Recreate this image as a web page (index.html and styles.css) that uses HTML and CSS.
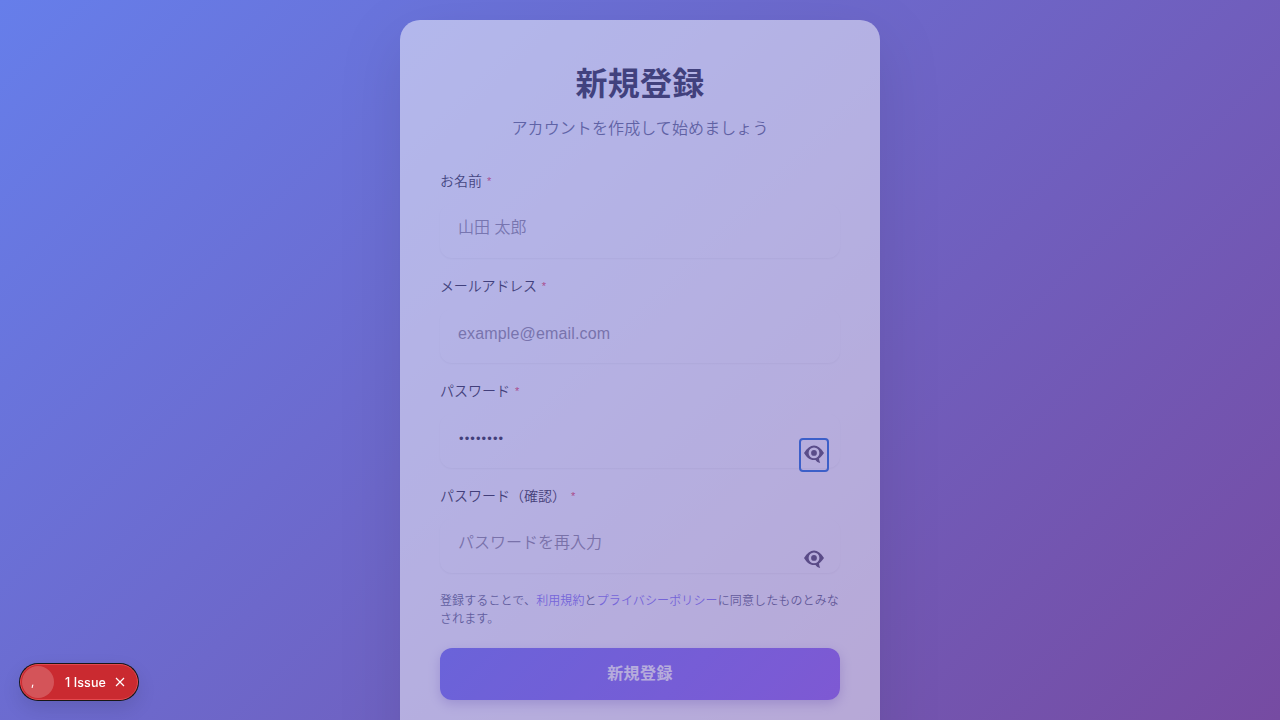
FILE: index.html
```html
<!DOCTYPE html>
<html lang="ja">
<head>
<meta charset="utf-8">
<title>新規登録</title>
<link rel="stylesheet" href="styles.css">
</head>
<body>
<main class="page">
  <section class="card">
    <header class="card-header">
      <h1 class="title">新規登録</h1>
      <p class="subtitle">アカウントを作成して始めましょう</p>
    </header>
    <form class="form">
      <div class="field">
        <label class="label" for="name">お名前 <span class="required">*</span></label>
        <input class="input" id="name" type="text" placeholder="山田 太郎">
      </div>
      <div class="field">
        <label class="label label-kana" for="email">メールアドレス <span class="required">*</span></label>
        <input class="input input-email" id="email" type="email" placeholder="example@email.com">
      </div>
      <div class="field">
        <label class="label" for="password">パスワード <span class="required">*</span></label>
        <input class="input input-password" id="password" type="password" value="password">
        <button class="toggle toggle-focused" type="button" aria-label="パスワードを表示">
          <svg class="eye" viewBox="0 0 20 20"><path fill-rule="evenodd" d="M0 9C3 4 6.300 1.500 10 1.500S17 4 20 9c-1.800 2.800-3.300 4.300-5 5.400.1 1.600.5 2.900 1.200 4.600-2.200-.5-3.800-1.600-4.700-3.100C6.700 16.700 3 14.200 0 9zM10 3.500a5.400 5.400 0 1 0 0 10.800 5.400 5.400 0 1 0 0-10.800z"/><circle cx="10" cy="8.900" r="2.900"/></svg>
        </button>
      </div>
      <div class="field">
        <label class="label" for="confirm">パスワード（確認） <span class="required">*</span></label>
        <input class="input input-confirm" id="confirm" type="password" placeholder="パスワードを再入力">
        <button class="toggle" type="button" aria-label="パスワードを表示">
          <svg class="eye" viewBox="0 0 20 20"><path fill-rule="evenodd" d="M0 9C3 4 6.300 1.500 10 1.500S17 4 20 9c-1.800 2.800-3.300 4.300-5 5.400.1 1.600.5 2.900 1.200 4.600-2.200-.5-3.800-1.600-4.700-3.100C6.700 16.700 3 14.200 0 9zM10 3.500a5.400 5.400 0 1 0 0 10.800 5.400 5.400 0 1 0 0-10.800z"/><circle cx="10" cy="8.900" r="2.900"/></svg>
        </button>
      </div>
      <p class="terms">登録することで、<a class="link">利用規約</a>と<a class="link">プライバシーポリシー</a>に同意したものとみなされます。</p>
      <button class="submit" type="button">新規登録</button>
    </form>
  </section>
</main>
<aside class="issue">
  <span class="issue-mark">,</span>
  <span class="issue-text">1 Issue</span>
  <svg class="issue-close" viewBox="0 0 10 10"><path d="M1 1l8 8M9 1l-8 8"/></svg>
</aside>
</body>
</html>
```
FILE: styles.css
```css
* { box-sizing: border-box; }
body {
  margin: 0;
  height: 720px;
  overflow: hidden;
  font-family: "Liberation Sans", "Noto Sans CJK JP", sans-serif;
  font-weight: 350;
}
.page {
  display: flex;
  justify-content: center;
  height: 720px;
  padding-top: 20px;
  overflow: hidden;
  background: linear-gradient(135deg, #667eea 0%, #764ba2 100%);
}
.card {
  width: 480px;
  height: 880px;
  flex-shrink: 0;
  padding: 41px 40px 40px;
  border-radius: 20px;
  background: #fff;
  box-shadow: 0 20px 60px rgba(0, 0, 0, 0.2);
  opacity: 0.49;
}
.card-header { text-align: center; }
.title {
  margin: 0;
  font-size: 32px;
  line-height: 46px;
  font-weight: 700;
  letter-spacing: 0.2px;
  color: #16162a;
}
.subtitle {
  margin: 10px 0 30px;
  font-size: 16px;
  line-height: 24px;
  letter-spacing: 0.1px;
  color: #545a7a;
}
.form { display: flex; flex-direction: column; }
.field { position: relative; height: 105px; }
.label {
  display: block;
  height: 20px;
  margin-bottom: 13px;
  font-size: 14px;
  line-height: 20px;
  color: #16162a;
}
.label-kana { letter-spacing: -0.15px; }
.required {
  margin-left: 1px;
  font-size: 11px;
  line-height: 1;
  vertical-align: 1px;
  color: #e8304e;
}
.input {
  display: block;
  width: 400px;
  height: 54px;
  padding: 0 16px 6px;
  border: 2px solid transparent;
  border-radius: 12px;
  outline: none;
  background: #fff;
  box-shadow: 0 1px 2px rgba(0, 0, 0, 0.06);
  font: 350 16px "Liberation Sans", "Noto Sans CJK JP", sans-serif;
  color: #16162a;
}
.input-email { padding-bottom: 4px; letter-spacing: 0.15px; }
.input-password {
  padding-left: 17px;
  font-size: 13px;
  letter-spacing: 1.1px;
}
.input-confirm { padding-bottom: 7px; }
.input::placeholder { color: #85818f; }
.toggle {
  position: absolute;
  top: 57px;
  right: 11px;
  width: 30px;
  height: 34px;
  padding: 4px 3px 6px;
  border: 2px solid transparent;
  border-radius: 4px;
  background: none;
}
.toggle-focused { border-color: #0862d6; }
.eye { display: block; width: 20px; height: 20px; fill: #443c56; }
.terms {
  margin: 1px 0 20px;
  font-size: 12px;
  line-height: 18px;
  letter-spacing: 0.12px;
  color: #545a7a;
}
.link { color: #7c6cf4; }
.submit {
  height: 52px;
  padding: 0 0 4px;
  border: 0;
  border-radius: 12px;
  background: linear-gradient(135deg, #6666f1 0%, #8b5cf6 100%);
  box-shadow: 0 4px 12px rgba(80, 60, 160, 0.3);
  font: 600 16px "Liberation Sans", "Noto Sans CJK JP", sans-serif;
  letter-spacing: 0.4px;
  color: #fff;
}
.issue {
  position: fixed;
  left: 20px;
  top: 664px;
  display: flex;
  align-items: center;
  width: 118px;
  height: 36px;
  padding: 0 12px 0 1px;
  border: 1px solid #e5484d;
  border-radius: 18px;
  background: #ca2a30;
  box-shadow: 0 0 0 1px #171717, 0 8px 20px rgba(0, 0, 0, 0.12);
  font: 500 13px Inter, sans-serif;
  color: #fff;
}
.issue-mark {
  width: 32px;
  height: 32px;
  flex-shrink: 0;
  padding-left: 9px;
  border-radius: 50%;
  background: rgba(255, 255, 255, 0.2);
  font-size: 11px;
  line-height: 32px;
}
.issue-text {
  margin-left: 11px;
  font-size: 12.5px;
  letter-spacing: 0.1px;
  white-space: nowrap;
}
.issue-close {
  width: 10px;
  height: 10px;
  margin-left: auto;
  fill: none;
  stroke: #fff;
  stroke-width: 1.2;
}
```
